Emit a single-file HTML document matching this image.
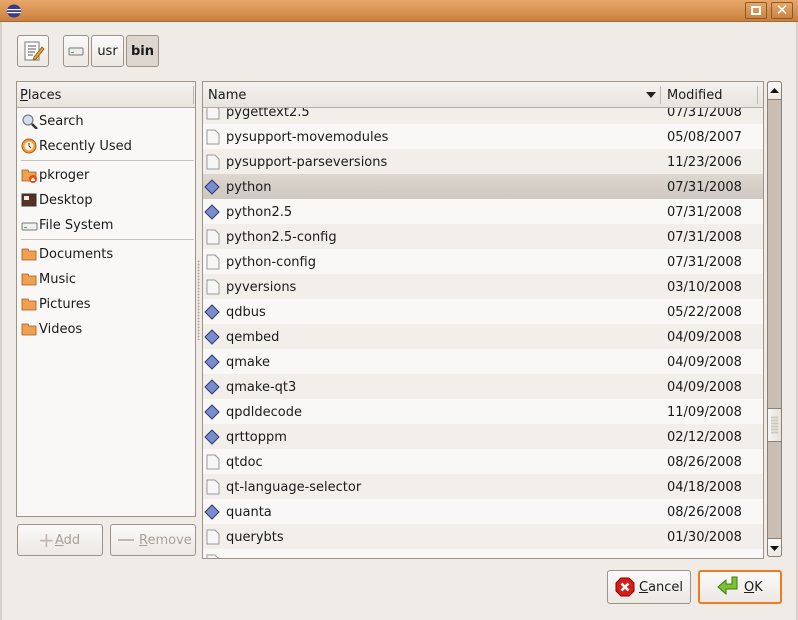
<!DOCTYPE html>
<html><head><meta charset="utf-8"><style>
*{box-sizing:border-box;margin:0;padding:0}
body{width:798px;height:620px;overflow:hidden;background:#efebe7;font-family:"DejaVu Sans","Liberation Sans",sans-serif;font-size:13px;color:#1a1a1a;position:relative}
.a{position:absolute}
.btn{position:absolute;border:1px solid #9d9388;border-radius:3px;background:linear-gradient(#fbfaf9,#ece8e3);}
.row{position:absolute;left:0;width:459px;height:25px;line-height:27px;white-space:nowrap}
.row .n{position:absolute;left:23px}
.row .d{position:absolute;left:464px}
.pl{position:absolute;left:4px;height:25px;line-height:27px;white-space:nowrap}
.pl span{position:absolute;left:18px}
.sep{position:absolute;left:4px;width:173px;height:1px;background:#c9c2bb}
.ico{position:absolute;left:0px;top:5px}
</style></head><body>
<div class="a" style="left:0;top:0;width:798px;height:22px;background:linear-gradient(#e8a86a,#c9803f);border-bottom:1px solid #a86a30"></div>
<svg class="a" style="left:6px;top:4px" width="16" height="14"><ellipse cx="8" cy="7" rx="7" ry="6.5" fill="#3a3a8c"/><rect x="1" y="5" width="14" height="1.2" fill="#fff"/><rect x="1" y="8" width="14" height="1.2" fill="#fff"/></svg>
<div class="a" style="left:745px;top:2px;width:22px;height:17px;border:1px solid #8a5a2a;border-radius:2px;background:linear-gradient(#e6a66a,#cc8445)"></div>
<div class="a" style="left:751px;top:6px;width:10px;height:9px;border:2px solid #fff"></div>
<div class="a" style="left:771px;top:2px;width:22px;height:17px;border:1px solid #8a5a2a;border-radius:2px;background:linear-gradient(#e6a66a,#cc8445);color:#fff;font-weight:bold;font-size:15px;line-height:15px;text-align:center">✕</div>
<div class="a" style="left:0;top:22px;width:2px;height:598px;background:#d6d0ca"></div>
<div class="a" style="left:796px;top:22px;width:2px;height:598px;background:#d6d0ca"></div>

<div class="btn" style="left:17px;top:35px;width:32px;height:32px"></div>
<svg class="a" style="left:23px;top:40px" width="22" height="22"><rect x="2" y="2" width="14" height="18" fill="#fff" stroke="#777"/><path d="M5 6h8M5 9h8M5 12h7M5 15h5" stroke="#555"/><path d="M11 17l8-10 2 2-8 10-3 1z" fill="#e8a030" stroke="#8a5a10" stroke-width=".8"/></svg>
<div class="btn" style="left:63px;top:35px;width:26px;height:32px"></div>
<svg class="a" style="left:68px;top:45px" width="16" height="12"><rect x="1" y="3" width="14" height="7" rx="1" fill="#eee" stroke="#777"/><rect x="3" y="7" width="3" height="1" fill="#5a5"/></svg>
<div class="btn" style="left:91px;top:35px;width:33px;height:32px;text-align:center;line-height:32px">usr</div>
<div class="btn" style="left:126px;top:35px;width:33px;height:32px;text-align:center;line-height:32px;font-weight:bold;background:#dcd6cf">bin</div>

<div class="a" style="left:16px;top:81px;width:180px;height:436px;border:1px solid #9d9388;background:#f9f8f6">
 <div class="a" style="left:0;top:0;width:178px;height:26px;background:linear-gradient(#f4f2ef,#e8e4df);border-bottom:1px solid #b5aca3;line-height:27px;padding-left:3px"><u>P</u>laces</div>
 <div class="a" style="left:176px;top:4px;width:1px;height:18px;background:#c0b8b0"></div>
 <div class="pl" style="top:26px"><svg class="ico" width="17" height="16"><circle cx="7" cy="7" r="5" fill="#cfe0f0" stroke="#667"/><path d="M11 11l5 5" stroke="#333" stroke-width="2.5"/></svg><span>Search</span></div>
 <div class="pl" style="top:51px"><svg class="ico" width="17" height="16"><circle cx="8" cy="8" r="7" fill="#f59a3a" stroke="#b05a10"/><circle cx="8" cy="8" r="4.5" fill="#fdf3e0"/><path d="M8 5v3l2 2" stroke="#444" fill="none"/></svg><span>Recently Used</span></div>
 <div class="sep" style="top:78px"></div>
 <div class="pl" style="top:80px"><svg class="ico" width="17" height="16"><path d="M1 3h6l1 2h7v9H1z" fill="#f0a050" stroke="#a05a20" stroke-width=".8"/><circle cx="12" cy="12" r="4" fill="#e85010"/><path d="M10 12.5l2-2 2 2v1.5h-4z" fill="#fff"/></svg><span>pkroger</span></div>
 <div class="pl" style="top:105px"><svg class="ico" width="17" height="16"><rect x="1" y="2" width="14" height="12" fill="#5a3020" stroke="#333"/><rect x="3" y="4" width="5" height="4" fill="#eee"/></svg><span>Desktop</span></div>
 <div class="pl" style="top:130px"><svg class="ico" width="17" height="16"><rect x="1" y="6" width="15" height="7" rx="1" fill="#eee" stroke="#777"/><rect x="3" y="10" width="3" height="1" fill="#5a5"/></svg><span>File System</span></div>
 <div class="sep" style="top:157px"></div>
 <div class="pl" style="top:159px"><svg class="ico" width="17" height="16"><path d="M1 3h6l1 2h7v9H1z" fill="#f0a050" stroke="#a05a20" stroke-width=".8"/></svg><span>Documents</span></div>
 <div class="pl" style="top:184px"><svg class="ico" width="17" height="16"><path d="M1 3h6l1 2h7v9H1z" fill="#f0a050" stroke="#a05a20" stroke-width=".8"/></svg><span>Music</span></div>
 <div class="pl" style="top:209px"><svg class="ico" width="17" height="16"><path d="M1 3h6l1 2h7v9H1z" fill="#f0a050" stroke="#a05a20" stroke-width=".8"/></svg><span>Pictures</span></div>
 <div class="pl" style="top:234px"><svg class="ico" width="17" height="16"><path d="M1 3h6l1 2h7v9H1z" fill="#f0a050" stroke="#a05a20" stroke-width=".8"/></svg><span>Videos</span></div>
</div>
<div class="a" style="left:197px;top:260px;width:3px;height:80px;background-image:radial-gradient(#b0a89f 40%,transparent 41%);background-size:3px 3px"></div>

<div class="btn" style="left:17px;top:524px;width:86px;height:32px;color:#a8a098;line-height:31px;padding-left:37px"><u>A</u>dd</div>
<div class="a" style="left:38px;top:533px;color:#c0b8b0;font-size:20px;line-height:14px">+</div>
<div class="btn" style="left:110px;top:524px;width:86px;height:32px;color:#a8a098;line-height:31px;padding-left:28px"><u>R</u>emove</div>
<div class="a" style="left:118px;top:539px;width:16px;height:2px;background:#c0b8b0"></div>

<div class="a" style="left:202px;top:81px;width:562px;height:478px;border:1px solid #9d9388;background:#f9f8f6;overflow:hidden">
 <div class="a" style="left:0;top:0;width:560px;height:476px">
<div class="row" style="top:17px;width:560px;background:#f2efeb"><svg class="ico" style="left:3px" width="14" height="16"><path d="M1 1h8l4 4v10H1z" fill="#f6f6f6" stroke="#999"/></svg><span class="n">pygettext2.5</span><span class="d">07/31/2008</span></div>
<div class="row" style="top:42px;width:560px"><svg class="ico" style="left:3px" width="14" height="16"><path d="M1 1h8l4 4v10H1z" fill="#f6f6f6" stroke="#999"/></svg><span class="n">pysupport-movemodules</span><span class="d">05/08/2007</span></div>
<div class="row" style="top:67px;width:560px;background:#f2efeb"><svg class="ico" style="left:3px" width="14" height="16"><path d="M1 1h8l4 4v10H1z" fill="#f6f6f6" stroke="#999"/></svg><span class="n">pysupport-parseversions</span><span class="d">11/23/2006</span></div>
<div class="row" style="top:92px;width:560px;background:linear-gradient(#ddd7d0,#cfc8c0)"><svg class="ico" style="left:1px" width="16" height="16"><path d="M8 1l7 7-7 7-7-7z" fill="#7a8ccc" stroke="#2a3a70"/></svg><span class="n">python</span><span class="d">07/31/2008</span></div>
<div class="row" style="top:117px;width:560px"><svg class="ico" style="left:1px" width="16" height="16"><path d="M8 1l7 7-7 7-7-7z" fill="#7a8ccc" stroke="#2a3a70"/></svg><span class="n">python2.5</span><span class="d">07/31/2008</span></div>
<div class="row" style="top:142px;width:560px;background:#f2efeb"><svg class="ico" style="left:3px" width="14" height="16"><path d="M1 1h8l4 4v10H1z" fill="#f6f6f6" stroke="#999"/></svg><span class="n">python2.5-config</span><span class="d">07/31/2008</span></div>
<div class="row" style="top:167px;width:560px"><svg class="ico" style="left:3px" width="14" height="16"><path d="M1 1h8l4 4v10H1z" fill="#f6f6f6" stroke="#999"/></svg><span class="n">python-config</span><span class="d">07/31/2008</span></div>
<div class="row" style="top:192px;width:560px;background:#f2efeb"><svg class="ico" style="left:3px" width="14" height="16"><path d="M1 1h8l4 4v10H1z" fill="#f6f6f6" stroke="#999"/></svg><span class="n">pyversions</span><span class="d">03/10/2008</span></div>
<div class="row" style="top:217px;width:560px"><svg class="ico" style="left:1px" width="16" height="16"><path d="M8 1l7 7-7 7-7-7z" fill="#7a8ccc" stroke="#2a3a70"/></svg><span class="n">qdbus</span><span class="d">05/22/2008</span></div>
<div class="row" style="top:242px;width:560px;background:#f2efeb"><svg class="ico" style="left:1px" width="16" height="16"><path d="M8 1l7 7-7 7-7-7z" fill="#7a8ccc" stroke="#2a3a70"/></svg><span class="n">qembed</span><span class="d">04/09/2008</span></div>
<div class="row" style="top:267px;width:560px"><svg class="ico" style="left:1px" width="16" height="16"><path d="M8 1l7 7-7 7-7-7z" fill="#7a8ccc" stroke="#2a3a70"/></svg><span class="n">qmake</span><span class="d">04/09/2008</span></div>
<div class="row" style="top:292px;width:560px;background:#f2efeb"><svg class="ico" style="left:1px" width="16" height="16"><path d="M8 1l7 7-7 7-7-7z" fill="#7a8ccc" stroke="#2a3a70"/></svg><span class="n">qmake-qt3</span><span class="d">04/09/2008</span></div>
<div class="row" style="top:317px;width:560px"><svg class="ico" style="left:1px" width="16" height="16"><path d="M8 1l7 7-7 7-7-7z" fill="#7a8ccc" stroke="#2a3a70"/></svg><span class="n">qpdldecode</span><span class="d">11/09/2008</span></div>
<div class="row" style="top:342px;width:560px;background:#f2efeb"><svg class="ico" style="left:1px" width="16" height="16"><path d="M8 1l7 7-7 7-7-7z" fill="#7a8ccc" stroke="#2a3a70"/></svg><span class="n">qrttoppm</span><span class="d">02/12/2008</span></div>
<div class="row" style="top:367px;width:560px"><svg class="ico" style="left:3px" width="14" height="16"><path d="M1 1h8l4 4v10H1z" fill="#f6f6f6" stroke="#999"/></svg><span class="n">qtdoc</span><span class="d">08/26/2008</span></div>
<div class="row" style="top:392px;width:560px;background:#f2efeb"><svg class="ico" style="left:3px" width="14" height="16"><path d="M1 1h8l4 4v10H1z" fill="#f6f6f6" stroke="#999"/></svg><span class="n">qt-language-selector</span><span class="d">04/18/2008</span></div>
<div class="row" style="top:417px;width:560px"><svg class="ico" style="left:1px" width="16" height="16"><path d="M8 1l7 7-7 7-7-7z" fill="#7a8ccc" stroke="#2a3a70"/></svg><span class="n">quanta</span><span class="d">08/26/2008</span></div>
<div class="row" style="top:442px;width:560px;background:#f2efeb"><svg class="ico" style="left:3px" width="14" height="16"><path d="M1 1h8l4 4v10H1z" fill="#f6f6f6" stroke="#999"/></svg><span class="n">querybts</span><span class="d">01/30/2008</span></div>
<div class="row" style="top:467px;width:560px"><svg class="ico" style="left:3px" width="14" height="16"><path d="M1 1h8l4 4v10H1z" fill="#f6f6f6" stroke="#999"/></svg></div>
 </div>
 <div class="a" style="left:0;top:0;width:560px;height:26px;background:linear-gradient(#f4f2ef,#e8e4df);border-bottom:1px solid #b5aca3;line-height:27px">
  <span class="a" style="left:5px">Name</span>
  <svg class="a" style="left:443px;top:10px" width="10" height="6"><path d="M0 0h10L5 6z" fill="#222"/></svg>
  <div class="a" style="left:457px;top:4px;width:1px;height:18px;background:#c0b8b0"></div>
  <span class="a" style="left:464px">Modified</span>
  <div class="a" style="left:554px;top:4px;width:1px;height:18px;background:#c0b8b0"></div>
 </div>
</div>
<div class="a" style="left:767px;top:81px;width:15px;height:476px;background:#c8beb4;border:1px solid #8a8078;border-radius:3px"></div>
<div class="a" style="left:767px;top:81px;width:15px;height:19px;background:linear-gradient(#fbfaf9,#ece8e3);border:1px solid #8a8078;border-radius:3px 3px 0 0"></div>
<svg class="a" style="left:770px;top:88px" width="9" height="5"><path d="M0 5h9L4.5 0z" fill="#111"/></svg>
<div class="a" style="left:767px;top:538px;width:15px;height:19px;background:linear-gradient(#fbfaf9,#ece8e3);border:1px solid #8a8078;border-radius:0 0 3px 3px"></div>
<svg class="a" style="left:770px;top:546px" width="9" height="5"><path d="M0 0h9L4.5 5z" fill="#111"/></svg>
<div class="a" style="left:767px;top:408px;width:15px;height:34px;background:linear-gradient(90deg,#f6f4f1,#e6e1db);border:1px solid #8a8078"></div>
<div class="a" style="left:771px;top:416px;width:7px;height:18px;background-image:radial-gradient(#b0a89f 45%,transparent 46%);background-size:2px 3px"></div>

<div class="btn" style="left:607px;top:570px;width:84px;height:34px;line-height:33px;padding-left:31px"><u>C</u>ancel</div>
<svg class="a" style="left:615px;top:577px" width="20" height="20"><path d="M6 1h8l5 5v8l-5 5H6l-5-5V6z" fill="#d81c1c" stroke="#8a0000"/><path d="M6.5 6.5l7 7M13.5 6.5l-7 7" stroke="#fff" stroke-width="2.6"/></svg>
<div class="btn" style="left:698px;top:570px;width:84px;height:34px;border:2px solid #f07a20;line-height:31px;padding-left:44px"><u>O</u>K</div>
<svg class="a" style="left:717px;top:576px" width="24" height="22"><path d="M15 1h5v12H9v5l-8-7 8-7v4h6z" fill="#7ac232" stroke="#3e7a10"/></svg>
</body></html>
